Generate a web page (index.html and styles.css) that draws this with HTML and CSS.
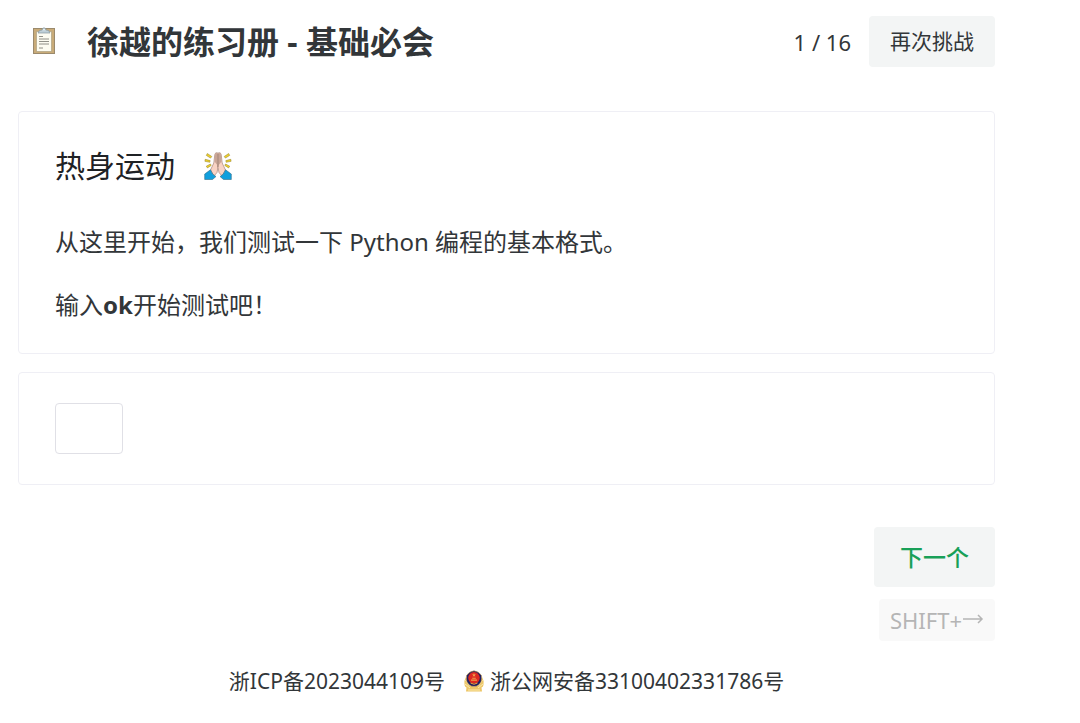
FILE: index.html
```html
<!DOCTYPE html>
<html lang="zh-CN">
<head>
	<meta charset="UTF-8">
	<meta name="viewport" content="width=device-width, initial-scale=1">
	<title>徐越的练习册 - 基础必会</title>
	<link rel="stylesheet" href="styles.css">
</head>
<body>

	<div class="page">
		<header class="header">
			<svg class="logo" viewBox="0 0 24 28" aria-hidden="true">
				<rect x="1.500" y="2.500" width="21" height="25" fill="#c9ab78" stroke="#9b8a6c"/>
				<path d="M4.500 5.500h15v20h-15z" fill="#fdfcf1" stroke="#a39778" stroke-width=".6"/>
				<path d="M6 7 L7.500 4.500 L10 4 Q10.500 1.800 12 1.800 T14 4 L16.500 4.500 L18 7 Z" fill="#bfd0d8" stroke="#84959d" stroke-width=".7"/>
				<circle cx="12" cy="3.600" r=".8" fill="#f5f8f9"/>
				<path d="M7 10.500h4M7 13h10M7 15.500h10M7 18h10M7 22h4" fill="none" stroke="#85857c" stroke-width=".9"/>
			</svg>
			<h1 class="title">徐越的练习册 - 基础必会</h1>
			<span class="progress">1 / 16</span>
			<button class="btn retry" type="button">再次挑战</button>
		</header>

		<main>
			<section class="card question">
				<h2 class="subject">热身运动
					<svg class="pray" viewBox="0 0 28 28" aria-hidden="true">
						<g fill="#efd22c" stroke="#8e7a24" stroke-width=".5">
							<path d="M3.300 1.500l4.500 3-1.200 1.600L2.300 3.400zM1.200 7.300l5 1.300-.4 1.700L.900 9.300zM2.300 14.200l4.200-2.200.7 1.500-3.800 2.400z"/>
							<path d="M24.700 1.500l-4.500 3 1.200 1.600 4.300-2.700zM26.800 7.300l-5 1.300.4 1.700 4.900-1zM25.700 14.200l-4.200-2.200-.7 1.500 3.800 2.400z"/>
						</g>
						<path d="M14 1Q11.200-.200 10.800 2.500L9.800 11 6.500 18l3.500 6 3-3.500 1-5z" fill="#f9d3c4" stroke="#97766a" stroke-width=".6"/>
						<path d="M14 1q2.800-1.200 3.200 1.500l1 8.500 3.300 7-3.500 6-3-3.500-1-5z" fill="#f9d3c4" stroke="#97766a" stroke-width=".6"/>
						<path d="M11.200 2Q12 .500 14 1q2-.5 2.800 1l.7 7.500L14 14l-3.500-4.500z" fill="#c9a596"/>
						<path d="M14 2v13" stroke="#8b7066" stroke-width=".6"/>
						<path d="M6.500 17.800L.700 22v5.500h7.800l3.500-3q-4-1.700-5.500-6.700zM21.500 17.800l5.800 4.200v5.500h-7.800l-3.500-3q4-1.700 5.500-6.700z" fill="#109fdd" stroke="#326c86" stroke-width=".6"/>
					</svg>
				</h2>
				<p>从这里开始，我们测试一下 Python 编程的基本格式。</p>
				<p>输入<strong>ok</strong>开始测试吧！</p>
			</section>

			<section class="card answer">
				<input class="answer-input" type="text" aria-label="答案" autocomplete="off">
			</section>

			<div class="actions">
				<button class="btn next" type="button">下一个</button>
				<kbd class="shortcut">SHIFT+<svg class="arrow" viewBox="0 0 22 12" role="img" aria-label="→"><path d="M1 5h19M16 1l4 4-4 4"/></svg></kbd>
			</div>
		</main>

		<footer class="footer">
			<a href="#">浙ICP备2023044109号</a>
			<a href="#">
				<svg class="badge" viewBox="0 0 22 22" aria-hidden="true">
					<path d="M3 7Q.500 11 1.500 15q.5 2 2 2.500L3 21.500h16l-.5-4q1.500-.5 2-2.500 1-4-1.500-8l-2 7-6 3-6-3z" fill="#edc667"/>
					<path d="M2.500 10l4 6M2 14l5 4M19.500 10l-4 6M20 14l-5 4M5 20h12" stroke="#fbe9ab" fill="none"/>
					<path d="M3.500 5.500Q6 1.500 11 .800q5 .7 7.500 4.700 1 7-3 9.500Q13.500 16.500 11 16.500T6.500 15q-4-2.500-3-9.500z" fill="#201f63" stroke="#d4a84c" stroke-width=".6"/>
					<ellipse cx="11" cy="7.800" rx="5.800" ry="5.800" fill="#dd2a20"/>
					<path d="M11 3l.6 1.400h1.500l-1.200.9.4 1.400-1.300-.8-1.300.8.400-1.400-1.200-.9h1.500zM8 9.500h6v1.200H8zM9.200 7.700h3.600v1H9.200z" fill="#f0a04a"/>
					<path d="M7.500 13q3.500 2.500 7 0" fill="none" stroke="#e6a63e"/>
				</svg>
				浙公网安备33100402331786号
			</a>
		</footer>
	</div>

</body>
</html>
```

FILE: styles.css
```css
* {
	box-sizing: border-box;
}

body {
	margin: 0;
	background: #fff;
	color: #323639;
	font-family: "Noto Sans", "Noto Sans CJK SC", sans-serif;
	font-size: 24px;
	line-height: 36px;
}

button, input, kbd {
	font-family: inherit;
}

.page {
	padding: 16px 85px 16px 18px;
}

/* header */
.header {
	display: flex;
	align-items: center;
	margin-bottom: 44px;
}

.logo {
	width: 24px;
	height: 28px;
	margin: 0 31px 4px 14px;
}

.title {
	flex: 1;
	margin: 0;
	font-size: 32px;
	line-height: 48px;
}

.progress {
	margin-right: 18px;
	font-size: 22px;
}

.btn {
	border: 0;
	border-radius: 4px;
	background: #f3f5f5;
	color: #323639;
	cursor: pointer;
}

.retry {
	padding: 9px 21px 10px;
	font-size: 21px;
	line-height: 32px;
}

/* cards */
.card {
	margin-bottom: 18px;
	padding: 30px 36px;
	border: 1px solid #efeff5;
	border-radius: 4px;
}

.subject {
	display: flex;
	align-items: center;
	gap: 29px;
	margin: 0 0 34px;
	color: #1f2225;
	font-size: 30px;
	font-weight: 400;
	line-height: 48px;
}

.pray {
	width: 28px;
	height: 28px;
}

.question p {
	margin: 0 0 27px;
}

.question p:last-child {
	margin-bottom: 0;
}

.answer-input {
	display: block;
	width: 68px;
	height: 51px;
	padding: 0 12px;
	border: 1px solid #e0e0e6;
	border-radius: 4px;
	font-size: 24px;
}

/* next button and its shortcut */
.actions {
	display: flex;
	flex-direction: column;
	align-items: flex-end;
	gap: 12px;
	margin-top: 42px;
}

.next {
	padding: 12px 26px;
	color: #18a058;
	font-size: 23px;
	font-weight: 500;
	line-height: 36px;
}

.shortcut {
	display: flex;
	align-items: center;
	padding: 5px 11px;
	border-radius: 4px;
	background: #f9f9f9;
	color: #b5b5b5;
	font-size: 22px;
	line-height: 32px;
}

.arrow {
	width: 22px;
	height: 12px;
	fill: none;
	stroke: #b5b5b5;
	stroke-width: 1.5;
}

/* footer */
.footer {
	display: flex;
	justify-content: center;
	gap: 18px;
	margin-top: 24px;
	font-size: 21px;
	line-height: 32px;
}

.footer a {
	display: flex;
	align-items: center;
	gap: 5px;
	color: inherit;
	text-decoration: none;
}

.badge {
	width: 22px;
	height: 22px;
}
```
